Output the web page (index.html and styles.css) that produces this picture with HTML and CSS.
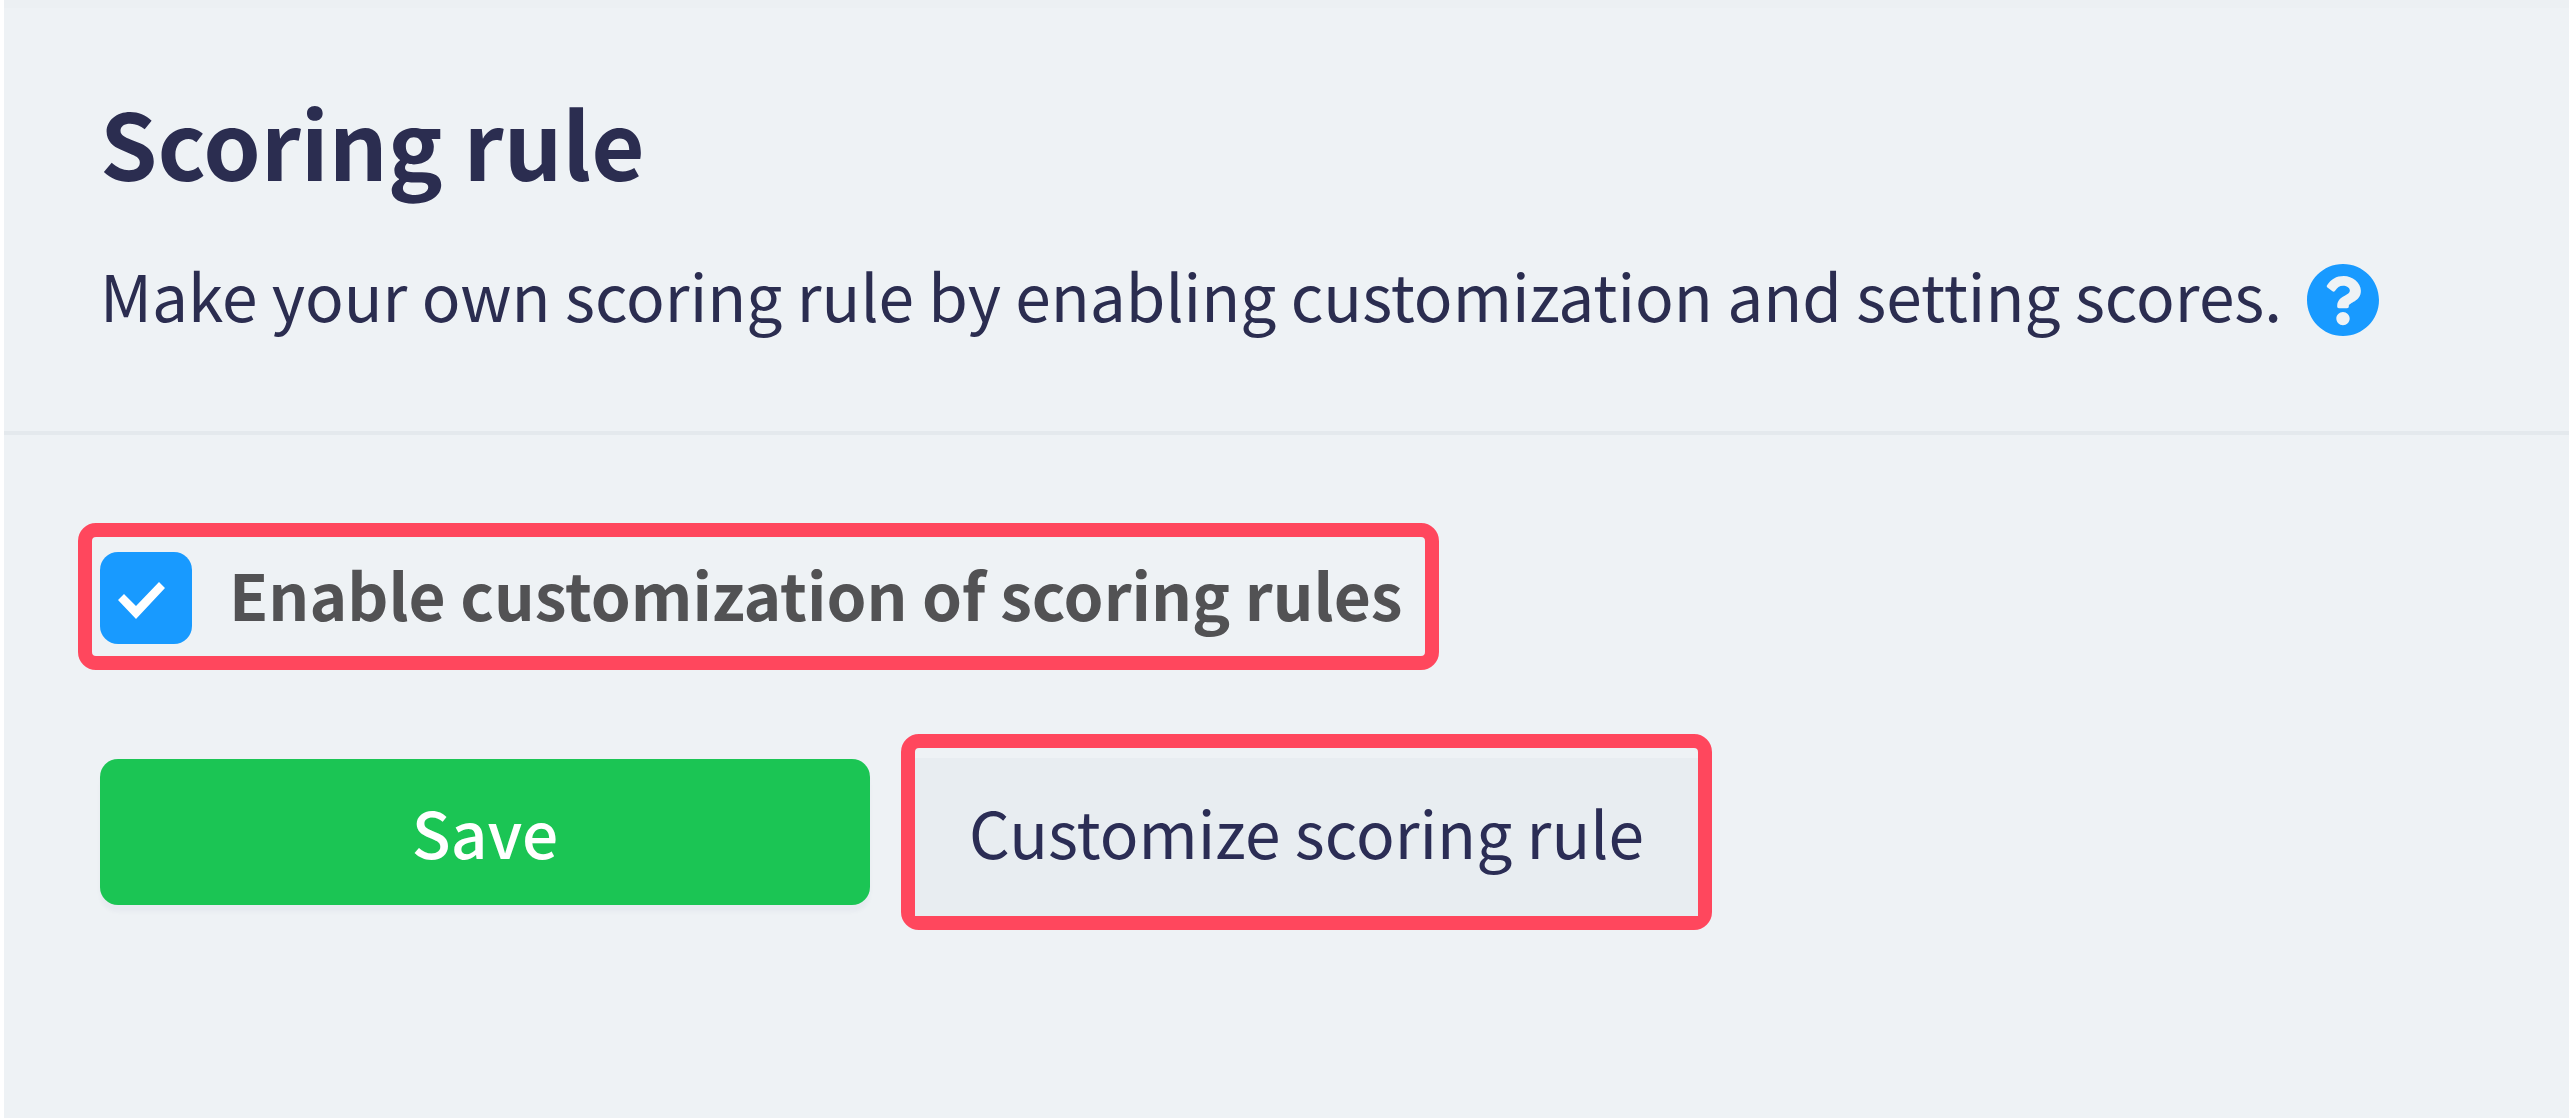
FILE: index.html
```html
<!DOCTYPE html>
<html lang="en">
<head>
    <meta charset="UTF-8">
    <meta name="viewport" content="width=device-width, initial-scale=1.0">
    <title>Scoring rule</title>
    <link rel="stylesheet" href="styles.css">
</head>
<body>
    <main class="panel">
        <header class="panel-header">
            <h1>Scoring rule</h1>
            <div class="description">
                <p>Make your own scoring rule by enabling customization and setting scores.</p>
                <a href="#" class="help" aria-label="Help">
                    <svg viewBox="8 8 496 496" aria-hidden="true">
                        <path d="M504 256c0 136.997-111.043 248-248 248S8 392.997 8 256C8 119.083 119.043 8 256 8s248 111.083 248 248zM262.655 90c-54.497 0-89.255 22.957-116.549 63.758-3.536 5.286-2.353 12.415 2.715 16.258l34.699 26.31c5.205 3.947 12.621 3.008 16.665-2.122 17.864-22.658 30.113-35.797 57.303-35.797 20.429 0 45.698 13.148 45.698 32.958 0 14.976-12.363 22.667-32.534 33.976C247.128 238.528 216 254.941 216 296v4c0 6.627 5.373 12 12 12h56c6.627 0 12-5.373 12-12v-1.333c0-28.462 83.186-29.647 83.186-106.667 0-58.002-60.165-102-116.531-102zM256 338c-25.365 0-46 20.635-46 46 0 25.364 20.635 46 46 46s46-20.636 46-46c0-25.364-20.635-46-46-46z"/>
                    </svg>
                </a>
            </div>
        </header>

        <form class="panel-body">
            <div class="highlight option">
                <input type="checkbox" id="enableRules" checked>
                <label for="enableRules">Enable customization of scoring rules</label>
            </div>

            <div class="actions">
                <button type="button" class="save">Save</button>
                <div class="highlight customize-box">
                    <button type="button" class="customize">Customize scoring rule</button>
                </div>
            </div>
        </form>
    </main>
</body>
</html>
```

FILE: styles.css
```css
* {
    margin: 0;
    padding: 0;
    box-sizing: border-box;
}

body {
    font-family: "Noto Sans CJK SC", "Open Sans", sans-serif;
    font-size: 64px;
    line-height: 84px;
    background-color: #fff;
    color: #2b2d50;
}

.panel {
    min-height: 100vh;
    margin-left: 4px;
    margin-right: 2px;
    background-color: #eef2f5;
    border-top: 8px solid #ecf0f3;
}

/* Header */
.panel-header {
    padding: 85px 96px 95px;
    border-bottom: 4px solid #e4e9ed;
}

h1 {
    font-size: 92px;
    line-height: 96px;
    font-weight: bold;
}

.description {
    display: flex;
    align-items: flex-end;
    gap: 25px;
    margin-top: 63px;
}

.help {
    flex: none;
    width: 72px;
    height: 72px;
}

.help svg {
    display: block;
    fill: #189aff;
}

/* Body */
.panel-body {
    display: flex;
    flex-direction: column;
    align-items: flex-start;
    gap: 64px;
    padding: 88px 74px;
}

.highlight {
    border: 14px solid #ff475d;
    border-radius: 18px;
}

.option {
    display: flex;
    align-items: center;
    gap: 37px;
    padding: 15px 22px 12px 8px;
}

.option label {
    padding-bottom: 10px;
    line-height: 80px;
    font-weight: bold;
    color: #525254;
}

.option input {
    appearance: none;
    flex: none;
    width: 92px;
    height: 92px;
    border-radius: 18px;
    background-color: #189aff;
}

.option input:checked::before {
    content: "";
    display: block;
    width: 92px;
    height: 92px;
    background-color: #fff;
    clip-path: polygon(18px 48px, 24px 42px, 36px 54px, 59px 30px, 65px 36px, 36px 67px);
}

.actions {
    display: flex;
    align-items: center;
    gap: 31px;
    padding-left: 22px;
}

button {
    border: none;
    font: inherit;
    cursor: pointer;
}

.save {
    width: 770px;
    height: 146px;
    padding-bottom: 2px;
    border-radius: 18px;
    background-color: #1bc554;
    box-shadow: 0 7px 4px rgba(43, 45, 80, 0.03);
    color: #fff;
    font-weight: 500;
}

.customize-box {
    padding-top: 10px;
}

.customize {
    display: block;
    padding: 31px 54px 43px;
    background-color: #e8edf1;
    color: #2b2d55;
}
```
